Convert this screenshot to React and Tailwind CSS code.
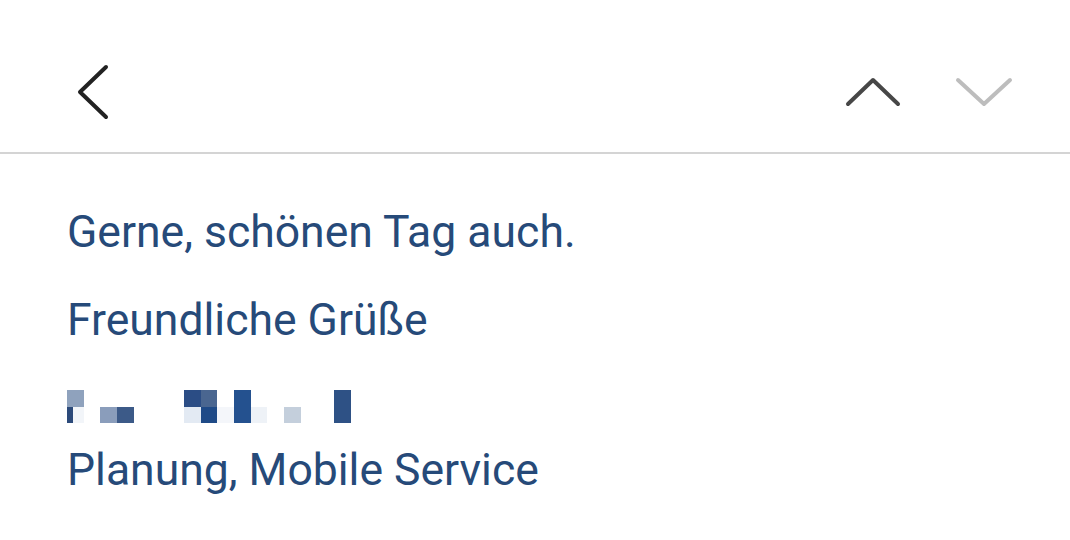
import React from 'react';

const row1 = ['#8fa2bd', null, null, null, null, null, null, '#2b4d85', '#4a6690', null, '#24518f', null, null, null, null, null, '#2e5185'];
const row2 = ['split', null, '#8a9dbb', '#3c5a88', null, null, null, '#e3eaf3', '#1f4a87', '#f4f6fa', '#24518f', '#eef2f7', null, '#c4cfdc', null, null, '#2e5185'];

function PixelRow({ cells }) {
  return (
    <div className="flex h-[16.5px]">
      {cells.map((c, i) =>
        c === 'split' ? (
          <div key={i} className="w-[16.7px] h-full flex">
            <div className="w-[6px] h-full bg-[#2c4a7a]" />
            <div className="flex-1 h-full bg-[#f2f5f9]" />
          </div>
        ) : (
          <div key={i} className="w-[16.7px] h-full" style={{ background: c || 'transparent' }} />
        )
      )}
    </div>
  );
}

export default function App() {
  return (
    <div className="w-[1070px] h-[540px] bg-white overflow-hidden font-['Roboto',sans-serif]">
      <header className="h-[154px] border-b-2 border-[#d4d4d4] flex justify-between items-start pt-[62px] pl-[70px] pr-[57px]">
        <svg width="40" height="60" viewBox="0 0 40 60" fill="none" stroke="#222" strokeWidth="4" strokeLinecap="round" strokeLinejoin="round">
          <path d="M36 5 L10 30 L36 55" />
        </svg>
        <div className="flex gap-[50px] mt-[10px]">
          <svg width="60" height="40" viewBox="0 0 60 40" fill="none" stroke="#474747" strokeWidth="4" strokeLinecap="round" strokeLinejoin="round">
            <path d="M5 32 L30 8 L55 32" />
          </svg>
          <svg width="60" height="40" viewBox="0 0 60 40" fill="none" stroke="#bdbdbd" strokeWidth="4" strokeLinecap="round" strokeLinejoin="round">
            <path d="M5 8 L31 32 L57 8" />
          </svg>
        </div>
      </header>

      <div className="pl-[67px] pt-[53px] text-[#264a79] text-[44.5px] leading-[50px]">
        <div className="h-[50px]">Gerne, schönen Tag auch.</div>
        <div className="h-[50px] mt-[38px]">Freundliche Grüße</div>
        <div className="mt-[45px] h-[33px]">
          <PixelRow cells={row1} />
          <PixelRow cells={row2} />
        </div>
        <div className="h-[50px] mt-[22px]">Planung, Mobile Service</div>
      </div>
    </div>
  );
}
